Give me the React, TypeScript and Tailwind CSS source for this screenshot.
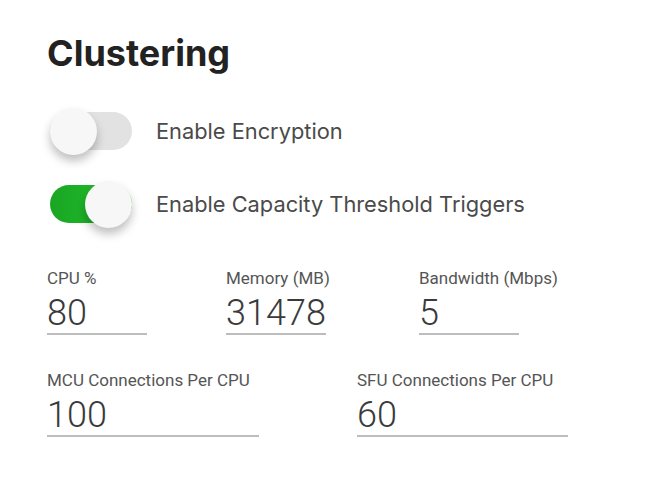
import { useState } from "react";

type ToggleProps = {
  on: boolean;
  onClick: () => void;
};

const Toggle = ({ on, onClick }: ToggleProps) => {
  return (
    <button
      onClick={onClick}
      className={
        on
          ? "relative w-[82px] h-[38px] rounded-full bg-gradient-to-r from-[#1aa524] to-[#22c52b] flex-none"
          : "relative w-[82px] h-[38px] rounded-full bg-[#e2e2e2] flex-none"
      }
    >
      <span
        className={
          on
            ? "absolute top-[-4px] left-[35px] w-[47px] h-[47px] rounded-full bg-[#f7f7f7] shadow-[0px_6px_10px_0px_#00000040]"
            : "absolute top-[-4px] left-0 w-[47px] h-[47px] rounded-full bg-[#f7f7f7] shadow-[0px_6px_10px_0px_#00000040]"
        }
      />
    </button>
  );
};

type FieldProps = {
  label: string;
  value: string;
  width: string;
};

const Field = ({ label, value, width }: FieldProps) => {
  return (
    <div className={width}>
      <div className="text-[17px] leading-[20px] text-[#555] whitespace-nowrap">{label}</div>
      <div className="mt-[7px] text-[36px] leading-[36px] font-light text-[#3a3a3a] pb-[2px] border-b-2 border-[#bdbdbd]">
        {value}
      </div>
    </div>
  );
};

export default function App() {
  const [encrypt, setEncrypt] = useState(false);
  const [capacity, setCapacity] = useState(true);

  return (
    <div className="w-[655px] h-[489px] bg-white pl-[47px] pt-[33px] font-['Roboto',sans-serif]">
      {/* Title */}
      <h1 className="font-['Inter',sans-serif] text-[36px] leading-[40px] font-bold text-[#222]">
        Clustering
      </h1>

      {/* Toggles */}
      <div className="mt-[39px] pl-[3px] flex flex-col gap-[35px]">
        <div className="flex items-center gap-[24px]">
          <Toggle on={encrypt} onClick={() => setEncrypt(!encrypt)} />
          <span className="font-['Inter',sans-serif] text-[21.8px] text-[#4a4a4a]">Enable Encryption</span>
        </div>
        <div className="flex items-center gap-[24px]">
          <Toggle on={capacity} onClick={() => setCapacity(!capacity)} />
          <span className="font-['Inter',sans-serif] text-[21.8px] text-[#4a4a4a]">
            Enable Capacity Threshold Triggers
          </span>
        </div>
      </div>

      {/* Thresholds */}
      <div className="mt-[45px] flex">
        <div className="w-[179px]">
          <Field label="CPU %" value="80" width="w-[100px]" />
        </div>
        <div className="w-[193px]">
          <Field label="Memory (MB)" value="31478" width="w-[100px]" />
        </div>
        <Field label="Bandwidth (Mbps)" value="5" width="w-[100px]" />
      </div>

      <div className="mt-[35px] flex">
        <div className="w-[310px]">
          <Field label="MCU Connections Per CPU" value="100" width="w-[212px]" />
        </div>
        <Field label="SFU Connections Per CPU" value="60" width="w-[211px]" />
      </div>
    </div>
  );
}
